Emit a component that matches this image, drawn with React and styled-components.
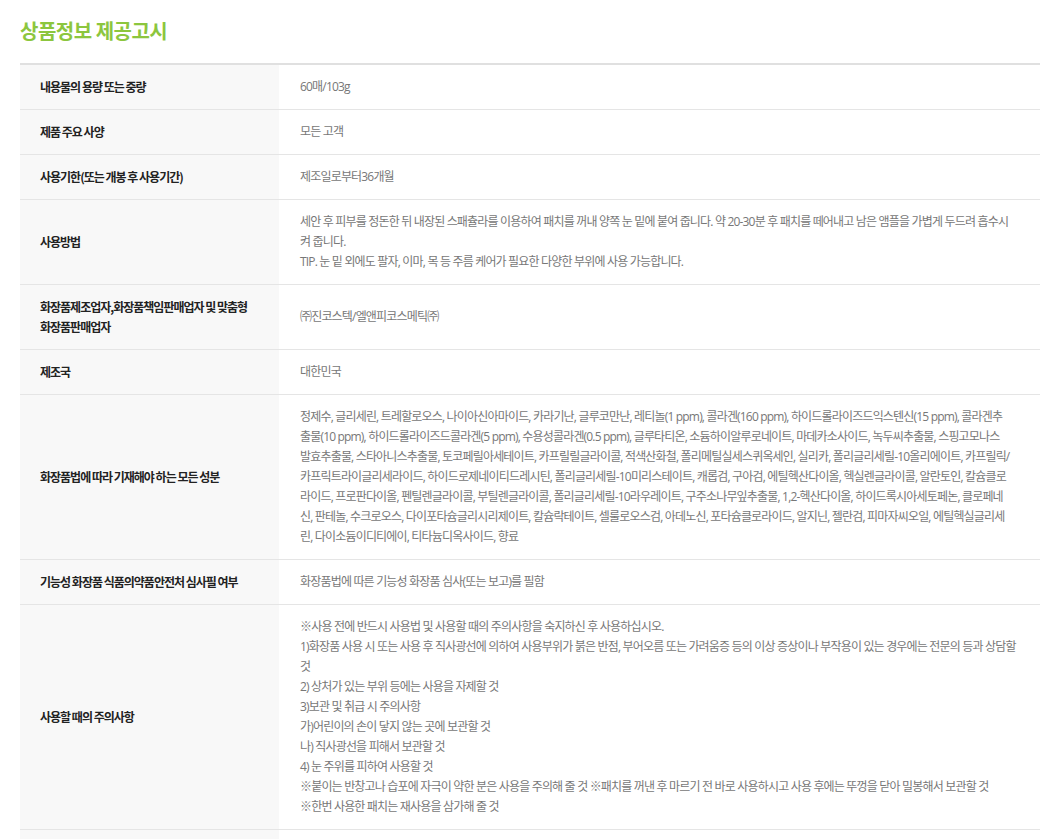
import React from 'react';
import styled, { createGlobalStyle } from 'styled-components';

const GlobalStyle = createGlobalStyle`
  html, body {
    margin: 0;
    padding: 0;
    background: #fff;
    overflow: hidden;
  }
  body {
    font-family: "Noto Sans CJK KR", "Noto Sans", sans-serif;
  }
`;

const Page = styled.div`
  padding: 17px 15px 0 20px;
`;

const Title = styled.h2`
  margin: 0 0 18px;
  font-size: 20px;
  line-height: 28px;
  font-weight: 700;
  color: #8cc63e;
  letter-spacing: -0.5px;
`;

const Table = styled.div`
  width: 1020px;
  border-top: 2px solid #e0e0e0;
`;

const Row = styled.div`
  display: grid;
  grid-template-columns: 259px 1fr;
  border-bottom: 1px solid #e5e5e5;
`;

const Label = styled.div`
  display: flex;
  align-items: center;
  background: #f8f8f8;
  padding: 12px 20px;
  font-size: 12px;
  line-height: 20px;
  font-weight: 700;
  color: #222;
  letter-spacing: -1px;
  word-break: keep-all;
`;

const Value = styled.div`
  display: flex;
  flex-direction: column;
  justify-content: center;
  padding: 12px 20px 12px 21px;
  font-family: "Open Sans", "Noto Sans CJK KR", sans-serif;
  font-size: 12px;
  line-height: 20px;
  color: #777;
  letter-spacing: -0.82px;
  word-break: break-all;
`;

const rows = [
  ['내용물의 용량 또는 중량', ['60매/103g']],
  ['제품 주요 사양', ['모든 고객']],
  ['사용기한(또는 개봉 후 사용기간)', ['제조일로부터36개월']],
  ['사용방법', [
    '세안 후 피부를 정돈한 뒤 내장된 스패츌라를 이용하여 패치를 꺼내 양쪽 눈 밑에 붙여 줍니다. 약 20-30분 후 패치를 떼어내고 남은 앰플을 가볍게 두드려 흡수시',
    '켜 줍니다.',
    'TIP. 눈 밑 외에도 팔자, 이마, 목 등 주름 케어가 필요한 다양한 부위에 사용 가능합니다.',
  ]],
  ['화장품제조업자,화장품책임판매업자 및 맞춤형 화장품판매업자', ['㈜진코스텍/엘앤피코스메틱㈜']],
  ['제조국', ['대한민국']],
  ['화장품법에 따라 기재해야 하는 모든 성분', [
    '정제수, 글리세린, 트레할로오스, 나이아신아마이드, 카라기난, 글루코만난, 레티놀(1 ppm), 콜라겐(160 ppm), 하이드롤라이즈드익스텐신(15 ppm), 콜라겐추',
    '출물(10 ppm), 하이드롤라이즈드콜라겐(5 ppm), 수용성콜라겐(0.5 ppm), 글루타티온, 소듐하이알루로네이트, 마데카소사이드, 녹두씨추출물, 스핑고모나스',
    '발효추출물, 스타아니스추출물, 토코페릴아세테이트, 카프릴릴글라이콜, 적색산화철, 폴리메틸실세스퀴옥세인, 실리카, 폴리글리세릴-10올리에이트, 카프릴릭/',
    '카프릭트라이글리세라이드, 하이드로제네이티드레시틴, 폴리글리세릴-10미리스테이트, 캐롭검, 구아검, 에틸헥산다이올, 헥실렌글라이콜, 알란토인, 칼슘클로',
    '라이드, 프로판다이올, 펜틸렌글라이콜, 부틸렌글라이콜, 폴리글리세릴-10라우레이트, 구주소나무잎추출물, 1,2-헥산다이올, 하이드록시아세토페논, 클로페네',
    '신, 판테놀, 수크로오스, 다이포타슘글리시리제이트, 칼슘락테이트, 셀룰로오스검, 아데노신, 포타슘클로라이드, 알지닌, 젤란검, 피마자씨오일, 에틸헥실글리세',
    '린, 다이소듐이디티에이, 티타늄디옥사이드, 향료',
  ]],
  ['기능성 화장품 식품의약품안전처 심사필 여부', ['화장품법에 따른 기능성 화장품 심사(또는 보고)를 필함']],
  ['사용할 때의 주의사항', [
    '※사용 전에 반드시 사용법 및 사용할 때의 주의사항을 숙지하신 후 사용하십시오.',
    '1)화장품 사용 시 또는 사용 후 직사광선에 의하여 사용부위가 붉은 반점, 부어오름 또는 가려움증 등의 이상 증상이나 부작용이 있는 경우에는 전문의 등과 상담할',
    '것',
    '2) 상처가 있는 부위 등에는 사용을 자제할 것',
    '3)보관 및 취급 시 주의사항',
    '가)어린이의 손이 닿지 않는 곳에 보관할 것',
    '나) 직사광선을 피해서 보관할 것',
    '4) 눈 주위를 피하여 사용할 것',
    '※붙이는 반창고나 습포에 자극이 약한 분은 사용을 주의해 줄 것 ※패치를 꺼낸 후 마르기 전 바로 사용하시고 사용 후에는 뚜껑을 닫아 밀봉해서 보관할 것',
    '※한번 사용한 패치는 재사용을 삼가해 줄 것',
  ]],
  ['품질보증기준', ['본 제품에 이상이 있을 경우 공정거래위원회 고시 "소비자분쟁해결기준"에 의해 보상해 드립니다.']],
];

export default function App() {
  return (
    <Page>
      <GlobalStyle />
      <Title>상품정보 제공고시</Title>
      <Table>
        {rows.map(([label, lines]) => (
          <Row key={label}>
            <Label>{label}</Label>
            <Value>
              {lines.map((line, i) => (
                <div key={i}>{line}</div>
              ))}
            </Value>
          </Row>
        ))}
      </Table>
    </Page>
  );
}
